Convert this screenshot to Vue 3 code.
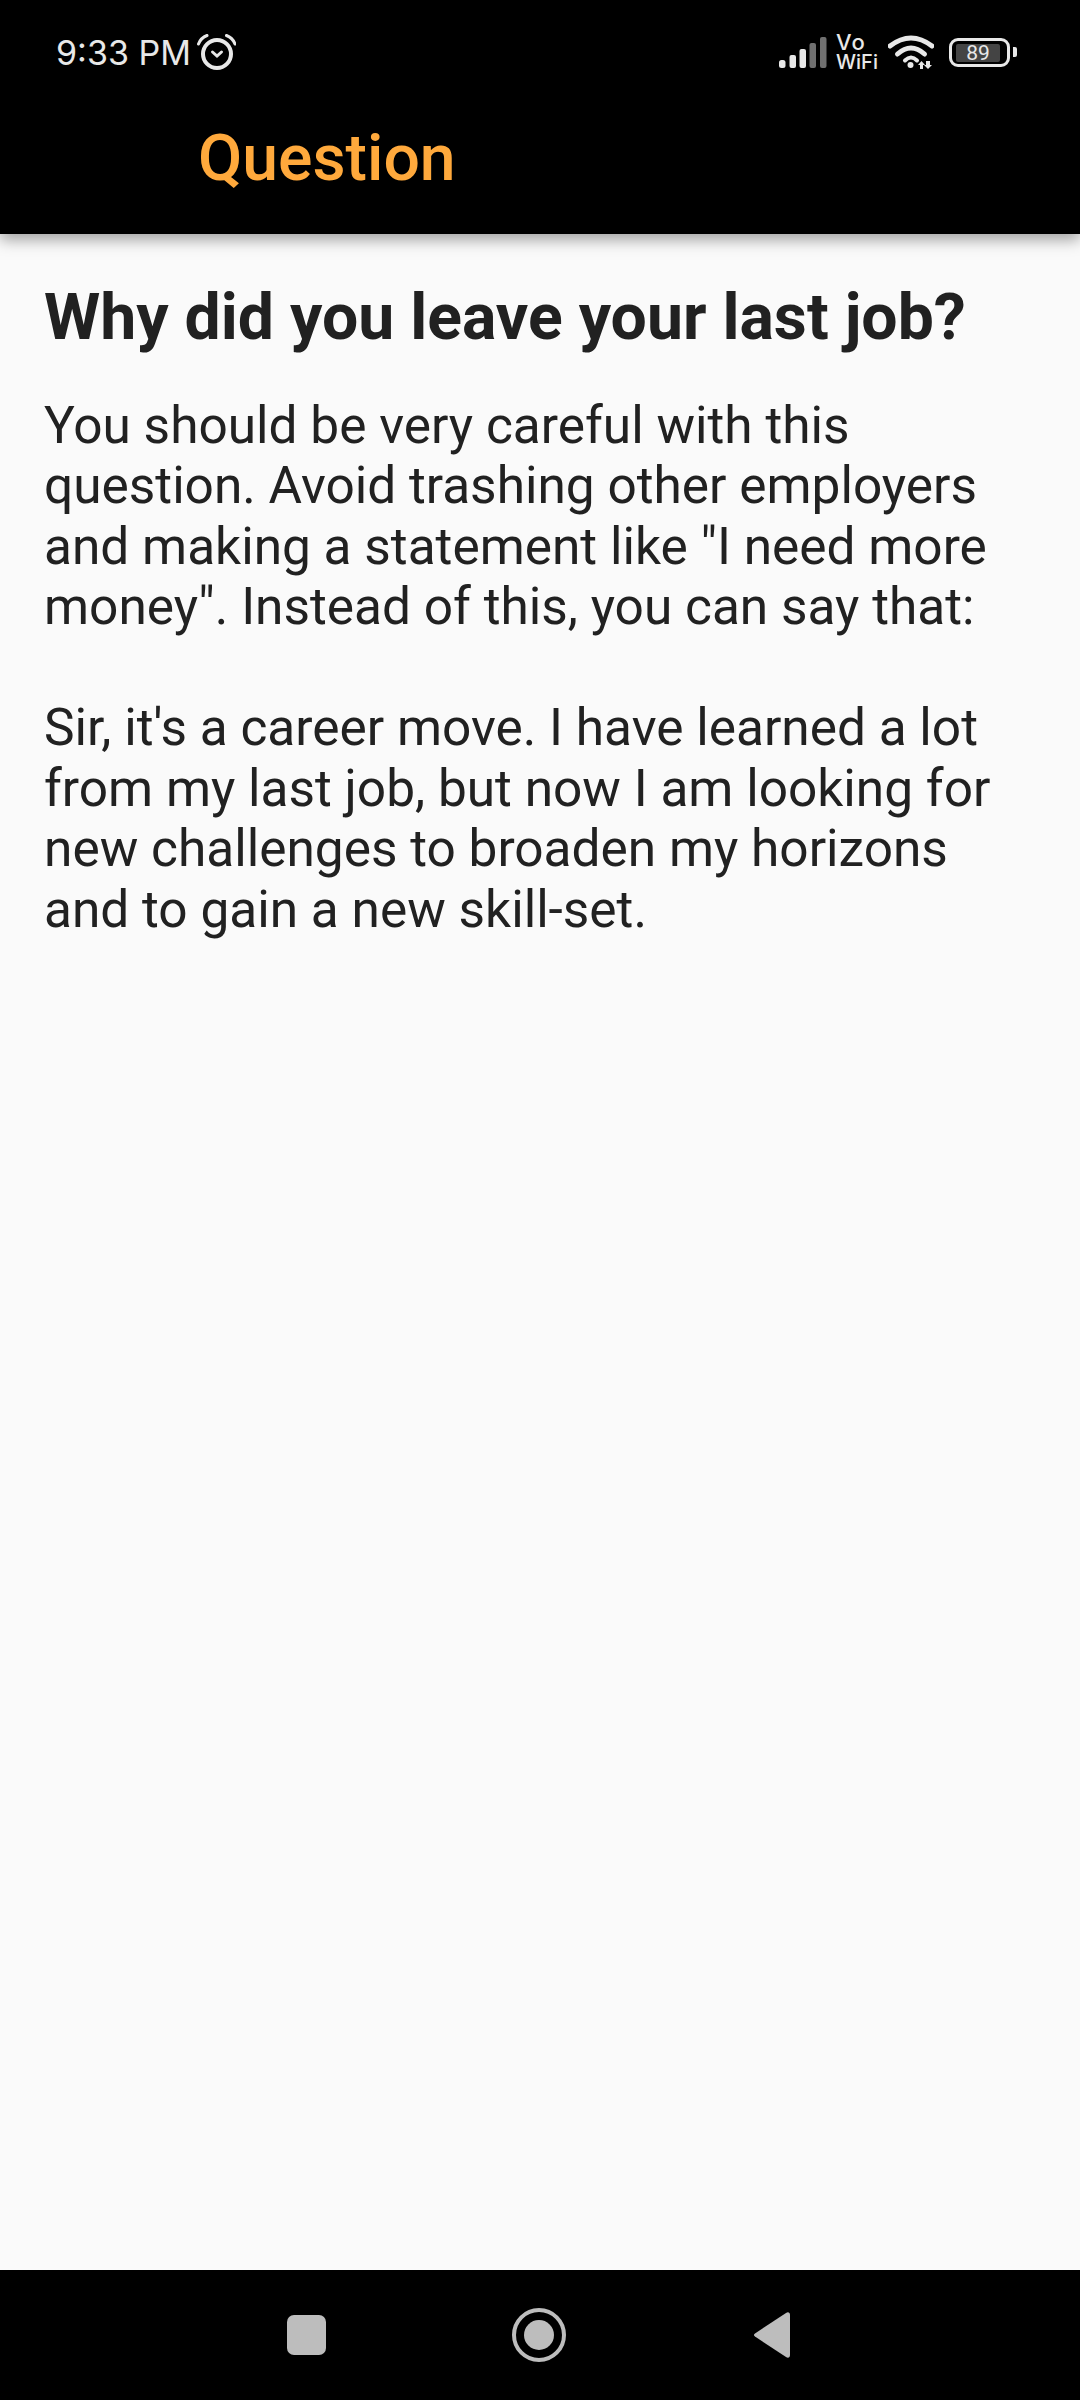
<script setup>
const title = 'Why did you leave your last job?'
const paragraphs = [
  'You should be very careful with this question. Avoid trashing other employers and making a statement like "I need more money". Instead of this, you can say that:',
  "Sir, it's a career move. I have learned a lot from my last job, but now I am looking for new challenges to broaden my horizons and to gain a new skill-set.",
]
</script>

<template>
  <div class="screen">
    <header class="appbar">
      <div class="status">
        <div class="status-left">
          <span class="time">9:33 PM</span>
          <svg width="39" height="36" viewBox="0 0 39 36" fill="none" stroke="#e8e8e8" stroke-linecap="round">
            <circle cx="20" cy="20" r="14" stroke-width="4" />
            <path d="M15.500 18l4.500 4 4.500-4" stroke-width="3" />
            <path d="M1.500 10C3 6 6 3 10 1.500M38 10C36.500 6 33.500 3 29.500 1.500" stroke-width="3" />
          </svg>
        </div>
        <div class="status-right">
          <svg width="48" height="31" viewBox="0 0 48 31" fill="#e8e8e8">
            <rect x="0" y="23" width="6.500" height="8" rx="2.500" />
            <rect x="10.500" y="18" width="6.500" height="13" rx="2" />
            <rect x="20.500" y="12" width="6.500" height="19" rx="2" />
            <rect x="30.500" y="6" width="6.500" height="25" rx="2" fill="#707070" />
            <rect x="41" y="0" width="6.500" height="31" rx="2" fill="#707070" />
          </svg>
          <div class="vowifi">Vo<br />WiFi</div>
          <svg class="wifi" width="46" height="34" viewBox="0 0 46 34" fill="none" stroke="#e8e8e8" stroke-width="5">
            <path d="M2 11Q23 -5 44 11" stroke-linecap="round" />
            <path d="M9.500 19Q23 7 36.500 19" stroke-linecap="round" />
            <path d="M17 25.500Q23 19.500 29 25.500" stroke-linecap="round" stroke-width="4" />
            <circle cx="22.500" cy="30" r="3" fill="#e8e8e8" stroke="none" />
            <path d="M30 30l3.500-4 3.500 4h-2v4h-3v-4zM38 26h4v4h2l-4 4-4-4h2z" fill="#e8e8e8" stroke="none" />
          </svg>
          <div class="battery">
            <div class="battery-body"><span class="level">89</span></div>
            <div class="battery-tip"></div>
          </div>
        </div>
      </div>
      <div class="toolbar">Question</div>
    </header>

    <main class="content">
      <h1>{{ title }}</h1>
      <p v-for="(p, i) in paragraphs" :key="i">{{ p }}</p>
    </main>

    <nav class="navbar">
      <svg width="600" height="130" viewBox="0 0 600 130" fill="#bdbdbd">
        <rect x="47" y="45" width="39" height="40" rx="7" />
        <circle cx="299" cy="65" r="25" fill="none" stroke="#bdbdbd" stroke-width="4" />
        <circle cx="299" cy="65" r="15" />
        <path d="M515 63.500L546 43c2-1.300 4-.7 4 2v40c0 2.700-2 3.300-4 2L515 66.500c-1.400-1-1.400-2 0-3z" />
      </svg>
    </nav>
  </div>
</template>

<style>
html,
body {
  margin: 0;
  background: #fafafa;
}
</style>

<style scoped>
.screen {
  width: 1080px;
  height: 2400px;
  display: flex;
  flex-direction: column;
  background: #fafafa;
  font-family: Roboto, sans-serif;
  overflow: hidden;
}
.appbar {
  height: 234px;
  flex: none;
  background: #000;
  box-shadow: 0 6px 14px rgba(0, 0, 0, 0.35);
  position: relative;
}
.status {
  height: 104px;
  padding: 0 63px 0 56px;
  box-sizing: border-box;
  display: flex;
  justify-content: space-between;
  align-items: center;
}
.status-left {
  display: flex;
  align-items: center;
  gap: 6px;
}
.time {
  font-family: Inter, sans-serif;
  font-size: 34px;
  color: #e8e8e8;
}
.status-right {
  display: flex;
  align-items: center;
  gap: 9px;
}
.vowifi {
  width: 41px;
  font-family: Inter, sans-serif;
  font-size: 20px;
  line-height: 20px;
  font-weight: 500;
  color: #e8e8e8;
  margin-right: 2px;
}
.vowifi::first-line {
  font-size: 22px;
  letter-spacing: 1px;
}
.wifi {
  margin-right: 6px;
}
.battery {
  display: flex;
  align-items: center;
  gap: 3px;
}
.battery-body {
  border: 3px solid #e8e8e8;
  border-radius: 9px;
  padding: 3px 4px 2px;
  box-sizing: border-box;
  width: 61px;
  height: 29px;
}
.level {
  display: block;
  width: 44px;
  height: 18px;
  background: #444;
  color: #e8e8e8;
  font-size: 21px;
  line-height: 18px;
  text-align: center;
  border-radius: 2px;
}
.battery-tip {
  width: 4px;
  height: 10px;
  background: #e8e8e8;
  border-radius: 0 2px 2px 0;
}
.toolbar {
  padding: 19px 0 0 198px;
  font-size: 64.300px;
  line-height: 70px;
  font-weight: 500;
  color: #ffa93c;
}
.content {
  flex: 1;
  padding: 0 44px;
}
h1 {
  margin: 47px 0 0;
  font-size: 64.300px;
  line-height: 72px;
  font-weight: 700;
  color: #212121;
}
p {
  margin: 0;
  font-size: 51.400px;
  line-height: 60.500px;
  color: #212121;
}
h1 + p {
  margin-top: 42.500px;
}
p + p {
  margin-top: 60.500px;
}
.navbar {
  height: 130px;
  flex: none;
  background: #000;
  display: flex;
  justify-content: center;
}
</style>
